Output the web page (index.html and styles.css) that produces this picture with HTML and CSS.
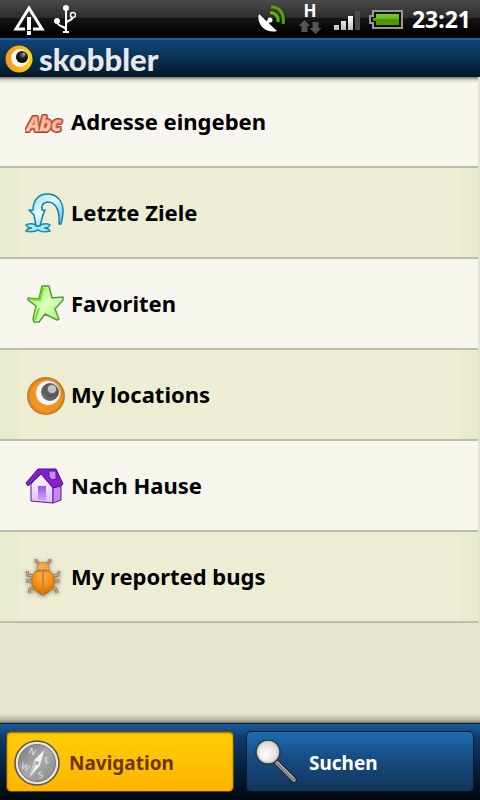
FILE: index.html
```html
<!DOCTYPE html>
<html lang="de">
<head>
    <meta charset="UTF-8">
    <meta name="viewport" content="width=device-width, initial-scale=1.0">
    <title>skobbler</title>
    <link rel="stylesheet" href="styles.css">
</head>
<body>
    <div class="status-bar">
        <div class="status-group">
            <svg width="32" height="32" viewBox="0 0 32 32">
                <path d="M12 26H3L16 5l13 21h-9" fill="none" stroke="#fff" stroke-width="3"/>
                <path d="M14 14h4v13h-4zM14 28h4v4h-4z" fill="#fff"/>
            </svg>
            <svg width="22" height="30" viewBox="0 0 22 30">
                <path d="M12 4v23M3 17c0 7 9 4 9 9M12 20c0-5 7-2 7-8" fill="none" stroke="#fff" stroke-width="2"/>
                <circle cx="12" cy="4" r="3" fill="#fff"/>
                <circle cx="3" cy="17" r="3" fill="#fff"/>
                <circle cx="19" cy="11" r="2.500" fill="#222" stroke="#fff" stroke-width="1.500"/>
                <path d="M9 27h6v2H9z" fill="#fff"/>
            </svg>
        </div>
        <div class="status-group status-right">
            <svg width="28" height="28" viewBox="0 0 28 28">
                <path d="M1 9c-3 10 7 20 18 17z" fill="#fff"/>
                <path d="M9 18l4-4" stroke="#fff" stroke-width="3"/>
                <circle cx="12" cy="15" r="2.500" fill="#fff"/>
                <path d="M12 8c5-1 9 4 8 9" fill="none" stroke="#63b800" stroke-width="3"/>
                <path d="M13 2c8-1 14 7 12 17" fill="none" stroke="#58a300" stroke-width="3"/>
            </svg>
            <div class="data-state">
                <span>H</span>
                <svg width="22" height="16" viewBox="0 0 22 16">
                    <path d="M5.500 1l6 6h-3v6h-6v-6h-3z" fill="#555"/>
                    <path d="M13.500 3h6v6h3l-6 6-6-6h3z" fill="#555"/>
                </svg>
            </div>
            <svg width="26" height="22" viewBox="0 0 26 22">
                <defs>
                    <linearGradient id="bars" x1="0" y1="0" x2="0" y2="1">
                        <stop offset="0" stop-color="#fff"/>
                        <stop offset="1" stop-color="#bbb"/>
                    </linearGradient>
                </defs>
                <path d="M0 17h5v5H0zM7 13h5v9H7zM14 8h5v14h-5z" fill="url(#bars)"/>
                <path d="M21 3h5v19h-5z" fill="#4a4a4a"/>
            </svg>
            <svg width="34" height="20" viewBox="0 0 34 20">
                <defs>
                    <linearGradient id="charge" x1="0" y1="0" x2="0" y2="1">
                        <stop offset="0" stop-color="#82c92e"/>
                        <stop offset=".45" stop-color="#6bb81c"/>
                        <stop offset=".5" stop-color="#4c9700"/>
                        <stop offset="1" stop-color="#4f9b00"/>
                    </linearGradient>
                </defs>
                <path d="M4 2h29v17H4v-5H1V7h3z" fill="#111" stroke="#999" stroke-width="2"/>
                <path d="M7 5h23v11H7v-4H4V9h3z" fill="url(#charge)"/>
            </svg>
            <time class="clock">23:21</time>
        </div>
    </div>

    <header class="header">
        <svg width="28" height="28" viewBox="0 0 28 28">
            <defs>
                <linearGradient id="logoRing" x1="0" y1="0" x2="1" y2="0">
                    <stop offset="0" stop-color="#f7941d"/>
                    <stop offset="1" stop-color="#ffd400"/>
                </linearGradient>
                <radialGradient id="pupil" cx=".55" cy=".35" r=".6">
                    <stop offset="0" stop-color="#777"/>
                    <stop offset=".5" stop-color="#1c1c1c"/>
                    <stop offset="1" stop-color="#000"/>
                </radialGradient>
            </defs>
            <circle cx="14" cy="14" r="13.500" fill="url(#logoRing)"/>
            <circle cx="15" cy="13" r="9" fill="#f4f4f2"/>
            <circle cx="17" cy="12" r="6" fill="url(#pupil)"/>
            <circle cx="19" cy="9" r="1.500" fill="#999"/>
        </svg>
        <h1>skobbler</h1>
    </header>

    <main class="content">
        <nav class="menu">
            <a href="#address">
                <svg width="40" height="40" viewBox="0 0 40 40">
                    <defs>
                        <linearGradient id="letters" x1="0" y1="0" x2="0" y2="1">
                            <stop offset="0" stop-color="#f49a78"/>
                            <stop offset="1" stop-color="#ffe3d6"/>
                        </linearGradient>
                    </defs>
                    <g class="abc">
                        <text x="2" y="29" class="abc-outline">Abc</text>
                        <text x="2" y="29" class="abc-edge">Abc</text>
                        <text x="2" y="29" fill="url(#letters)">Abc</text>
                    </g>
                </svg>
                <span>Adresse eingeben</span>
            </a>
            <a href="#recent">
                <svg width="40" height="40" viewBox="0 0 40 40">
                    <defs>
                        <linearGradient id="water" x1="0" y1="0" x2="1" y2="1">
                            <stop offset="0" stop-color="#7fdcf8"/>
                            <stop offset=".45" stop-color="#e2faff"/>
                            <stop offset="1" stop-color="#4cc3ea"/>
                        </linearGradient>
                    </defs>
                    <path d="M1 32c4-2 9-1 12 1 4-2 9-3 12-1-1 2-4 3-6 3 3 0 5 1 6 3-4 1-9 1-12-1-4 2-8 2-12 1 1-2 3-3 6-3-3 0-5-1-6-3z" fill="#a5eafa" stroke="#178aaa" stroke-width="1.500"/>
                    <path d="M8 17C8 7 14 1 22 1c11 0 16 8 16 17 0 5-1 9-2 13h-2c1-13-3-22-11-22-5 0-7 4-6 8h3l-2 5-3 11h-4L9 22l-5-5z" fill="url(#water)" stroke="#1580a5" stroke-width="1.500" stroke-linejoin="round"/>
                </svg>
                <span>Letzte Ziele</span>
            </a>
            <a href="#favourites">
                <svg width="40" height="40" viewBox="0 0 40 40">
                    <defs>
                        <linearGradient id="star" x1="0" y1="0" x2="1" y2="1">
                            <stop offset="0" stop-color="#7ce632"/>
                            <stop offset=".5" stop-color="#dcffc2"/>
                            <stop offset="1" stop-color="#a4f069"/>
                        </linearGradient>
                    </defs>
                    <path d="M17 2h7l3 12 11-1v3l-8 9 4 10-2 1-12-6-6 8H9l-1-3 3-13-8-6v-2l11 1z" fill="url(#star)" stroke="#5a9a3a" stroke-width="1.500" stroke-linejoin="round"/>
                    <path d="M18 4l-3 12-10-1M14 24l-4 12" fill="none" stroke="#70dc25" stroke-width="2"/>
                </svg>
                <span>Favoriten</span>
            </a>
            <a href="#locations">
                <svg width="40" height="40" viewBox="0 0 40 40">
                    <defs>
                        <radialGradient id="ball" cx=".5" cy=".5" r=".5">
                            <stop offset=".8" stop-color="#f4921f"/>
                            <stop offset="1" stop-color="#b9782c"/>
                        </radialGradient>
                        <radialGradient id="iris" cx=".6" cy=".35" r=".6">
                            <stop offset="0" stop-color="#999"/>
                            <stop offset=".6" stop-color="#555"/>
                            <stop offset="1" stop-color="#6c6c6c"/>
                        </radialGradient>
                    </defs>
                    <circle cx="21" cy="21" r="19" fill="url(#ball)"/>
                    <circle cx="23" cy="18" r="12.500" fill="#f7f7f7" stroke="#d7a35e"/>
                    <circle cx="25" cy="17" r="9" fill="url(#iris)"/>
                    <circle cx="27" cy="14" r="4" fill="#c4c4c4"/>
                </svg>
                <span>My locations</span>
            </a>
            <a href="#home">
                <svg width="40" height="40" viewBox="0 0 40 40">
                    <defs>
                        <linearGradient id="wall" x1="0" y1="0" x2="0" y2="1">
                            <stop offset="0" stop-color="#fff"/>
                            <stop offset="1" stop-color="#dfbcfb"/>
                        </linearGradient>
                        <linearGradient id="door" x1="0" y1="0" x2="0" y2="1">
                            <stop offset="0" stop-color="#9a58d6"/>
                            <stop offset="1" stop-color="#d9a5ff"/>
                        </linearGradient>
                    </defs>
                    <path d="M6 18L16 7l12 14v16L6 35z" fill="url(#wall)" stroke="#5a1595"/>
                    <path d="M28 20l8-3v17l-8 3z" fill="#c488f2" stroke="#5a1595"/>
                    <path d="M13 20h8v15l-8-1z" fill="url(#door)"/>
                    <path d="M13 3h18l7 15-2 2-8 2L16 8 3 20l-2-3z" fill="#8420cc" stroke="#4c0d86" stroke-linejoin="round"/>
                    <path d="M24 5h7v8l-4 1-3-3z" fill="#c68af5" stroke="#5a1595"/>
                </svg>
                <span>Nach Hause</span>
            </a>
            <a href="#bugs">
                <svg class="bug" width="40" height="40" viewBox="0 0 40 40">
                    <defs>
                        <radialGradient id="shell" cx=".5" cy=".2" r=".8">
                            <stop offset="0" stop-color="#ffb347"/>
                            <stop offset=".6" stop-color="#f68a0c"/>
                            <stop offset="1" stop-color="#c86400"/>
                        </radialGradient>
                    </defs>
                    <path d="M14 7l-3-3V2M22 7l3-3V2M8 19l-5-1-1-4M8 24H1M10 30l-5 2-1 4M28 19l5-1 1-4M28 24h7M26 30l5 2 1 4" fill="none" stroke="#9a7a58" stroke-width="3"/>
                    <path d="M14 7l-3-3V2M22 7l3-3V2M8 19l-5-1-1-4M8 24H1M10 30l-5 2-1 4M28 19l5-1 1-4M28 24h7M26 30l5 2 1 4" fill="none" stroke="#dfb98b" stroke-width="1"/>
                    <path d="M12 13c0-10 12-10 12 0z" fill="#ffa640" stroke="#b98650"/>
                    <path d="M11 14h14c8 9 4 20-7 24C7 34 3 23 11 14z" fill="url(#shell)" stroke="#a9763d"/>
                    <path d="M18 14v23" stroke="#c8843c" stroke-width="2"/>
                </svg>
                <span>My reported bugs</span>
            </a>
        </nav>
    </main>

    <footer class="tabs">
        <button type="button" class="tab active">
            <svg width="46" height="46" viewBox="0 0 46 46">
                <defs>
                    <linearGradient id="dial" x1="0" y1="0" x2="1" y2="1">
                        <stop offset="0" stop-color="#777"/>
                        <stop offset=".5" stop-color="#aaa"/>
                        <stop offset="1" stop-color="#858585"/>
                    </linearGradient>
                </defs>
                <circle cx="23" cy="23" r="22" fill="#e4e4e4" stroke="#5b5540" stroke-width="1.500"/>
                <circle cx="23" cy="23" r="18.500" fill="url(#dial)" stroke="#777"/>
                <g class="dial-letters">
                    <text x="15" y="15" transform="rotate(25 19 11)">N</text>
                    <text x="30" y="23" transform="rotate(-15 34 20)">E</text>
                    <text x="24" y="38" transform="rotate(-15 26 34)">S</text>
                    <text x="7" y="30" transform="rotate(25 11 27)">W</text>
                </g>
                <path d="M31 9l-5 17-11 12 5-18z" fill="#f4f4f4" stroke="#999" stroke-width=".5"/>
                <path d="M15 38l5-18 3 3z" fill="#c4c4c4"/>
                <circle cx="23" cy="23" r="2" fill="#aaa"/>
            </svg>
            <span>Navigation</span>
        </button>
        <button type="button" class="tab">
            <svg width="46" height="46" viewBox="0 0 46 46">
                <defs>
                    <radialGradient id="lens" cx=".4" cy=".6" r=".6">
                        <stop offset="0" stop-color="#fff"/>
                        <stop offset="1" stop-color="#d5d5d5"/>
                    </radialGradient>
                </defs>
                <path d="M22 22l18 18" stroke="#222" stroke-width="6" stroke-linecap="round"/>
                <path d="M22 22l18 18" stroke="#888" stroke-width="4" stroke-linecap="round"/>
                <path d="M23 21l17 17" stroke="#ccc" stroke-width="1"/>
                <circle cx="14" cy="12" r="12" fill="url(#lens)" stroke="#343434" stroke-width="1.500"/>
                <circle cx="14" cy="12" r="10.500" fill="none" stroke="#bbb"/>
            </svg>
            <span>Suchen</span>
        </button>
    </footer>
</body>
</html>
```
FILE: styles.css
```css
* {
    box-sizing: border-box;
}

body {
    display: flex;
    flex-direction: column;
    min-height: 100vh;
    margin: 0;
    background-color: #e5e5cf;
    font-family: "Noto Sans", "Open Sans", sans-serif;
    font-weight: bold;
}

svg {
    display: block;
    flex: none;
}

.status-bar {
    display: flex;
    justify-content: space-between;
    align-items: center;
    height: 38px;
    padding: 0 9px 0 13px;
    background: linear-gradient(#4a4a4a, #2c2c2c 46%, #151515 48%, #000 90%);
    color: #fff;
}

.status-group {
    display: flex;
    align-items: center;
    gap: 9px;
}

.data-state {
    display: flex;
    flex-direction: column;
    align-items: center;
    margin: 0 4px;
    font-size: 17px;
    line-height: 16px;
}

.clock {
    font-size: 23px;
}

.header {
    display: flex;
    align-items: center;
    gap: 6px;
    height: 39px;
    padding: 0 5px;
    border-top: 2px solid #1a60a8;
    background: linear-gradient(#134477, #0b3559 40%, #031829);
}

.header h1 {
    margin: 0;
    color: #e6e8ee;
    font-family: Lato, sans-serif;
    font-size: 31px;
    font-weight: 900;
    line-height: 32px;
}

.content {
    flex: 1;
    background: linear-gradient(to top, #77776a, #b5b5a2 3px, #e5e5cf 9px);
}

.menu {
    margin-right: 2px;
}

.menu a {
    display: flex;
    align-items: center;
    gap: 6px;
    height: 91px;
    padding-left: 25px;
    border-bottom: 2px solid #bcbca8;
    background-color: #f6f5ee;
    color: #000;
    font-size: 22px;
    text-decoration: none;
}

.menu a:first-child {
    background: linear-gradient(#77776d, #d8d7cc 3px, #f6f5ee 6px);
}

.menu a:nth-child(even) {
    background: linear-gradient(90deg, #e9ebcf 18px, #ecedd3 18px, #ecedd3 calc(100% - 18px), #e9ebcf calc(100% - 18px));
}

.menu span {
    padding-bottom: 2px;
}

.abc {
    font-size: 20px;
    font-style: italic;
}

.abc-outline {
    fill: #8f4a34;
    stroke: #8f4a34;
    stroke-width: 4px;
    stroke-linejoin: round;
}

.abc-edge {
    fill: #e5704a;
    stroke: #e5704a;
    stroke-width: 2px;
}

.bug {
    filter: drop-shadow(0 1px 2px #8a8a78);
}

.tabs {
    display: grid;
    grid-template-columns: 1fr 1fr;
    gap: 12px;
    padding: 7px 6px 8px;
    border-top: 1px solid #10202e;
    background: linear-gradient(#1a5c9c, #0c3a68 20%, #06203a 60%, #000a12 95%);
}

.tab {
    display: flex;
    align-items: center;
    gap: 9px;
    height: 61px;
    padding: 2px 7px 0;
    border: 1px solid #061a2c;
    border-radius: 5px;
    background: linear-gradient(#1d6db2, #174f85 40%, #12345a);
    color: #fff;
    font-family: inherit;
    font-size: 19px;
    font-weight: bold;
}

.tab.active {
    border-color: #6b4a00;
    background: linear-gradient(#ffce08, #ffb400);
    box-shadow: inset 0 1px 2px #8a6200;
    color: #6b3500;
}

.dial-letters {
    fill: #d0d0d0;
    font-size: 9px;
}
```
